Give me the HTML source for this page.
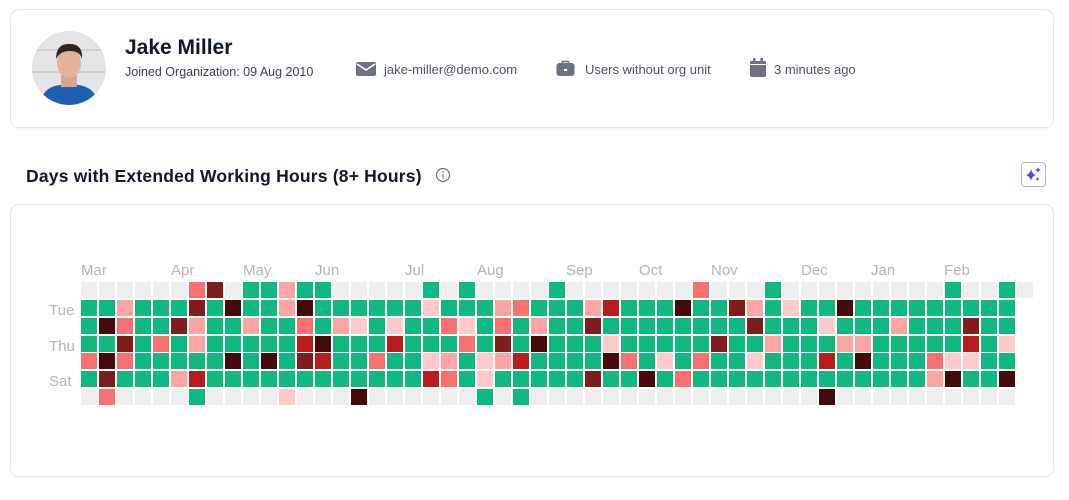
<!DOCTYPE html>
<html><head><meta charset="utf-8"><style>
*{box-sizing:border-box;margin:0;padding:0}
body{width:1069px;height:500px;background:#fff;font-family:"Liberation Sans",sans-serif;position:relative;overflow:hidden}
.card{position:absolute;left:10px;width:1044px;border:1px solid #e5e7eb;border-radius:9px;background:#fff;box-shadow:0 1px 2px rgba(0,0,0,.04)}
.abs{position:absolute}
.meta{position:absolute;top:62px;font-size:13px;color:#4b5563;white-space:nowrap}
.lbl{position:absolute;font-size:15px;color:#b5b5b5}
#grid div{position:absolute;width:16px;height:16px}
</style></head><body>
<div class="card" style="top:9px;height:119px"></div>
<svg class="abs" style="left:32px;top:31px" width="74" height="74" viewBox="0 0 74 74">
<defs><clipPath id="c"><circle cx="37" cy="37" r="37"/></clipPath></defs>
<g clip-path="url(#c)">
<rect width="74" height="74" fill="#e4e4e6"/>
<rect x="0" y="18" width="74" height="2" fill="#cfcfd2"/><rect x="0" y="40" width="74" height="2" fill="#cfcfd2"/>
<path d="M8 74 Q10 56 28 54 L46 54 Q64 56 66 74Z" fill="#1f5fb0"/>
<rect x="29" y="44" width="16" height="12" fill="#d9a58c"/>
<ellipse cx="37" cy="32" rx="12" ry="15" fill="#e2b39a"/>
<path d="M24 28 Q24 12 38 13 Q51 13 50 28 Q48 20 38 20 Q28 20 24 28Z" fill="#2f2420"/>
</g></svg>
<div class="abs" style="left:125px;top:36px;font-size:21px;font-weight:bold;color:#111827">Jake Miller</div>
<div class="abs" style="left:125px;top:65px;font-size:12.5px;color:#374151">Joined Organization: 09 Aug 2010</div>
<svg class="abs" style="left:356px;top:62px" width="20" height="14" viewBox="0 0 20 14"><rect width="20" height="14" rx="2" fill="#6b7280"/><path d="M1 2 L10 8 L19 2" stroke="#fff" stroke-width="1.6" fill="none"/></svg>
<div class="meta" style="left:384px">jake-miller@demo.com</div>
<svg class="abs" style="left:556px;top:58px" width="19" height="19" viewBox="0 0 19 19"><path d="M6.5 5V3.5h6V5" stroke="#6b7280" stroke-width="1.6" fill="none"/><rect x="0.5" y="5" width="18" height="13" rx="3" fill="#6b7280"/><rect x="8" y="11" width="3" height="2" fill="#fff"/></svg>
<div class="meta" style="left:585px">Users without org unit</div>
<svg class="abs" style="left:750px;top:58px" width="16" height="19" viewBox="0 0 16 19"><rect x="0" y="3" width="16" height="16" rx="1.5" fill="#6b7280"/><rect x="3" y="0" width="2.5" height="5" fill="#6b7280"/><rect x="10.5" y="0" width="2.5" height="5" fill="#6b7280"/><rect x="0" y="6" width="16" height="1" fill="#fff"/></svg>
<div class="meta" style="left:774px">3 minutes ago</div>

<div class="abs" style="left:26px;top:166px;font-size:17.5px;font-weight:bold;color:#111827;letter-spacing:0.2px">Days with Extended Working Hours (8+ Hours)</div>
<svg class="abs" style="left:435px;top:167px" width="16" height="16" viewBox="0 0 16 16"><circle cx="8" cy="8" r="6.5" stroke="#6b7280" stroke-width="1.2" fill="none"/><rect x="7.4" y="7" width="1.2" height="4.5" fill="#6b7280"/><circle cx="8" cy="5" r=".8" fill="#6b7280"/></svg>
<div class="abs" style="left:1021px;top:162px;width:25px;height:25px;border:1px solid #a5b4fc;border-radius:4px"></div>
<svg class="abs" style="left:1024px;top:165px" width="20" height="20" viewBox="0 0 20 20" fill="#4f46e5"><path d="M7 4 Q8 9 12 10 Q8 11 7 16 Q6 11 2 10 Q6 9 7 4Z"/><path d="M14 2 Q14.5 4.5 17 5 Q14.5 5.5 14 8 Q13.5 5.5 11 5 Q13.5 4.5 14 2Z"/><path d="M13.5 12 Q14 13.5 15.5 14 Q14 14.5 13.5 16 Q13 14.5 11.5 14 Q13 13.5 13.5 12Z"/></svg>

<div class="card" style="top:204px;height:273px"></div>
<div class="lbl" style="left:81px;top:262px">Mar</div>
<div class="lbl" style="left:171px;top:262px">Apr</div>
<div class="lbl" style="left:243px;top:262px">May</div>
<div class="lbl" style="left:315px;top:262px">Jun</div>
<div class="lbl" style="left:405px;top:262px">Jul</div>
<div class="lbl" style="left:477px;top:262px">Aug</div>
<div class="lbl" style="left:566px;top:262px">Sep</div>
<div class="lbl" style="left:639px;top:262px">Oct</div>
<div class="lbl" style="left:711px;top:262px">Nov</div>
<div class="lbl" style="left:801px;top:262px">Dec</div>
<div class="lbl" style="left:871px;top:262px">Jan</div>
<div class="lbl" style="left:944px;top:262px">Feb</div>
<div class="lbl" style="left:49px;top:302px">Tue</div>
<div class="lbl" style="left:49px;top:338px">Thu</div>
<div class="lbl" style="left:49px;top:373px">Sat</div>
<div id="grid"></div>
<script>
var cols="egggrge egDgDdr eqrdrge eggggge eggrgge egdggqe rdqqgRg dggggge eDggDge ggqggge ggggDge qqggggp gDrRdge gggDRge egqggge egpgggD egggrge egpRgge eggggge gpggpRe egrgqre ggprgge egggppg eqrdqge erggRgg egqDgge gggggge eggggge eqdggde eRgpDge egggrge eggggDe egggpge eDgggre rgggrge eggdgge edgggge eqdgpge gggqgge epgggge eggggge egpgRgD eDgqgge eggqDge eggggge egqggge eggggge egggrqe ggggpDe egdRpge eggggge gggpgDe e".split(" ");
var C={e:"#eeeeee",g:"#10b981",p:"#fecaca",q:"#fca5a5",r:"#f87171",R:"#b91c1c",d:"#7f1d1d",D:"#450a0a"};
var h="";
cols.forEach(function(s,i){for(var j=0;j<s.length;j++){h+='<div style="left:'+(81+i*18)+'px;top:'+(282+j*17.85).toFixed(1)+'px;background:'+C[s[j]]+'"></div>';}});
document.getElementById("grid").innerHTML=h;
</script>
</body></html>
